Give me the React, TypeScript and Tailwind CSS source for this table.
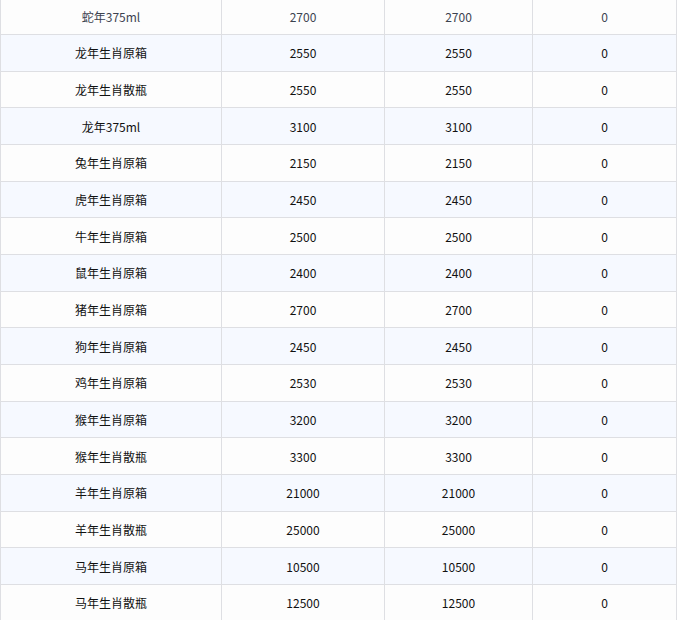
const rows: [string, number, number, number][] = [
  ['蛇年375ml', 2700, 2700, 0],
  ['龙年生肖原箱', 2550, 2550, 0],
  ['龙年生肖散瓶', 2550, 2550, 0],
  ['龙年375ml', 3100, 3100, 0],
  ['兔年生肖原箱', 2150, 2150, 0],
  ['虎年生肖原箱', 2450, 2450, 0],
  ['牛年生肖原箱', 2500, 2500, 0],
  ['鼠年生肖原箱', 2400, 2400, 0],
  ['猪年生肖原箱', 2700, 2700, 0],
  ['狗年生肖原箱', 2450, 2450, 0],
  ['鸡年生肖原箱', 2530, 2530, 0],
  ['猴年生肖原箱', 3200, 3200, 0],
  ['猴年生肖散瓶', 3300, 3300, 0],
  ['羊年生肖原箱', 21000, 21000, 0],
  ['羊年生肖散瓶', 25000, 25000, 0],
  ['马年生肖原箱', 10500, 10500, 0],
  ['马年生肖散瓶', 12500, 12500, 0],
];

export default function App() {
  return (
    <div className="w-[678px] h-[620px] overflow-hidden bg-white font-['Noto_Sans_CJK_SC','Microsoft_YaHei',sans-serif] text-[12px]">
      {/* table body, scrolled slightly so the first row is clipped */}
      <div className="-mt-[1.67px] w-[677px] border-l border-[#dedfe3]">
        {rows.map((r, i) => (
          <div
            key={i}
            className={`grid grid-cols-[221px_163px_148px_144px] h-[36.67px] ${i % 2 === 0 ? 'bg-[#fdfdfd]' : 'bg-[#f6f9ff]'} ${i === 0 ? 'text-[#3c4350]' : 'text-[#111]'}`}
          >
            {r.map((c, j) => (
              <div key={j} className="flex items-center justify-center border-r border-b border-[#dedfe3] pt-px">
                {c}
              </div>
            ))}
          </div>
        ))}
      </div>
    </div>
  );
}
